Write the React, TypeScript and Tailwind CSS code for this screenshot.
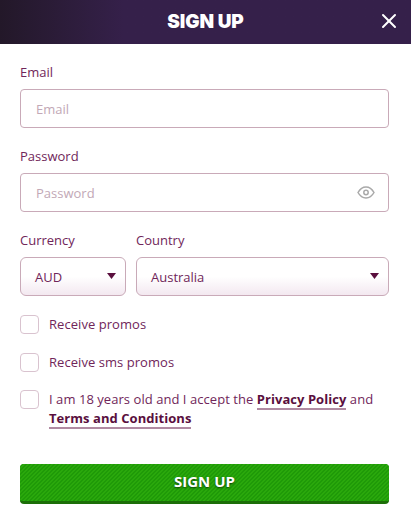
import { X } from 'lucide-react';

const labelCls = "block text-[13px] leading-[18px] text-[#70265a]";
const inputCls = "flex h-[39px] items-center rounded-[4px] border border-[#c9aab8] bg-white pl-[15px] pr-[13px] pt-[2px] text-[13px]";
const selectCls = "flex h-[39px] items-center justify-between rounded-[6px] border border-[#c9aab8] bg-gradient-to-b from-white from-50% to-[#f3e8f0] pl-[14px] pr-[9px] pt-[2px] text-[13px] text-[#70265a]";
const checkCls = "h-[19px] w-[19px] shrink-0 rounded-[4px] border border-[#d9c3cf] bg-white";
const textCls = "text-[13px] leading-[19px] tracking-[0.05px] text-[#70265a]";

function Caret() {
  return (
    <svg width="9" height="6" viewBox="0 0 9 6" className="mb-[4px]">
      <path d="M0 0h9L4.5 6z" fill="#5a0f3e" />
    </svg>
  );
}

function EyeIcon() {
  return (
    <svg width="18" height="13" viewBox="0 0 18 13" fill="none" stroke="#a9a9a9" strokeWidth="1.5" className="mb-[3px]">
      <path d="M1 6.5C3 3 5.7 1 9 1s6 2 8 5.5C15 10 12.3 12 9 12S3 10 1 6.5z" />
      <circle cx="9" cy="6.5" r="2.2" />
    </svg>
  );
}

export default function App() {
  return (
    <div className="h-[515px] w-[411px] overflow-hidden bg-white font-['Open_Sans',sans-serif]">
      <div className="relative flex h-[44px] items-center justify-center bg-gradient-to-r from-[#231829] via-[#35204a] via-30% to-[#35204a]">
        <span className="font-['Inter',sans-serif] text-[19px] font-black tracking-[-0.1px] text-white">SIGN UP</span>
        <button className="absolute right-[10px] top-[9px] text-white">
          <X size={24} strokeWidth={2} />
        </button>
      </div>

      <div className="pl-5 pr-[22px] pt-[19px]">
        <label className={labelCls}>Email</label>
        <div className={inputCls + " mt-[8px] text-[#c2a8b6]"}>Email</div>

        <label className={labelCls + " mt-[19px]"}>Password</label>
        <div className={inputCls + " mt-[8px] justify-between text-[#c2a8b6]"}>
          <span>Password</span>
          <EyeIcon />
        </div>

        <div className="mt-[19px] flex gap-[10px]">
          <div className="w-[106px]">
            <label className={labelCls}>Currency</label>
            <div className={selectCls + " mt-[8px]"}>
              <span>AUD</span>
              <Caret />
            </div>
          </div>
          <div className="flex-1">
            <label className={labelCls}>Country</label>
            <div className={selectCls + " mt-[8px]"}>
              <span>Australia</span>
              <Caret />
            </div>
          </div>
        </div>

        <div className="mt-[19px] flex items-center gap-[10px]">
          <div className={checkCls} />
          <span className={textCls}>Receive promos</span>
        </div>
        <div className="mt-[19px] flex items-center gap-[10px]">
          <div className={checkCls} />
          <span className={textCls}>Receive sms promos</span>
        </div>
        <div className="mt-[18px] flex items-start gap-[10px]">
          <div className={checkCls} />
          <p className={textCls}>
            I am 18 years old and I accept the{' '}
            <a className="border-b-2 border-[#b08aa2] font-bold text-[#5a0f3e]">Privacy Policy</a> and{' '}
            <a className="border-b-2 border-[#b08aa2] font-bold text-[#5a0f3e]">Terms and Conditions</a>
          </p>
        </div>

        <button className="mt-[36px] flex h-[40px] w-full items-center justify-center rounded-[4px] border-b-[3px] border-[#1c6e08] bg-[#27a50b] bg-[repeating-linear-gradient(135deg,#2aa80c_0px,#2aa80c_1.414px,#1f9a08_1.414px,#1f9a08_2.828px)] pb-[2px] text-[15px] font-bold text-white [text-shadow:0_1px_2px_rgba(0,0,0,0.6)]">
          SIGN UP
        </button>
      </div>
    </div>
  );
}
